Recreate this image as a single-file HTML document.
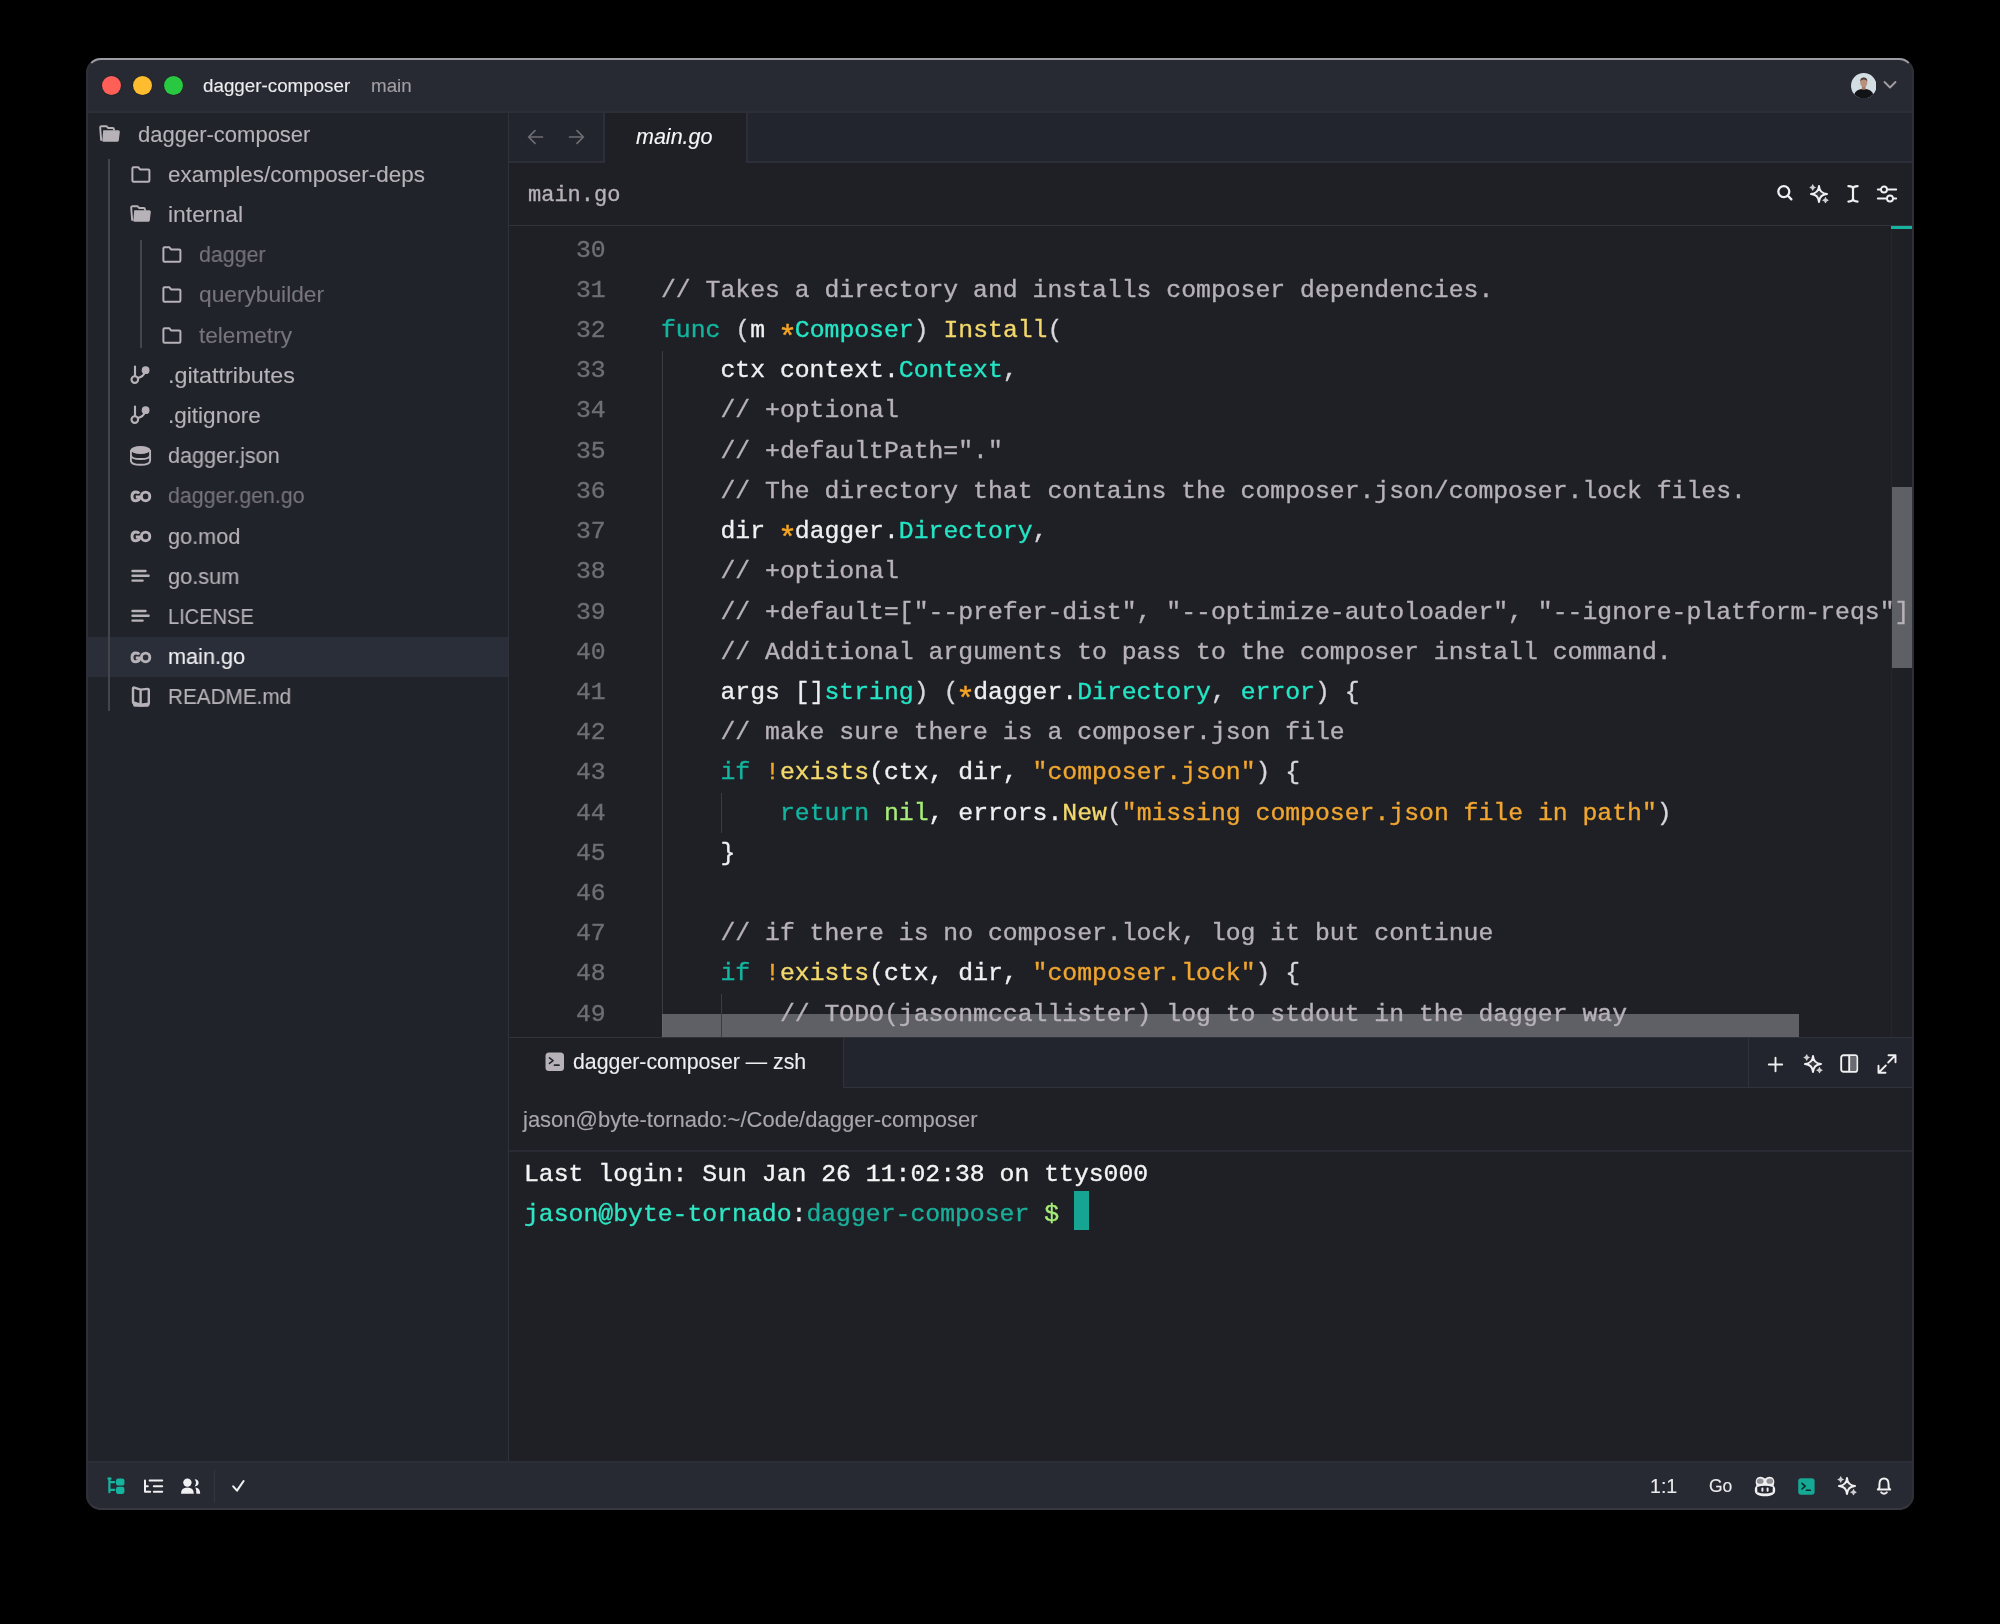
<!DOCTYPE html><html><head><meta charset="utf-8"><style>html,body{margin:0;padding:0;background:#000;width:2000px;height:1624px;overflow:hidden;position:relative} div{-webkit-text-stroke:0.12px} .t{will-change:transform}</style></head><body>
<div style="position:absolute;left:86px;top:58px;width:1828px;height:1452px;border-radius:15px;overflow:hidden;background:#1f2025">
<div style="position:absolute;left:-86px;top:-58px;width:2000px;height:1624px">
<div style="position:absolute;left:86px;top:58px;width:1828px;height:54px;background:#282a33;"></div>
<div style="position:absolute;left:86px;top:111px;width:1828px;height:2px;background:#2c2e38;"></div>
<div style="position:absolute;left:102.1px;top:75.7px;width:19px;height:19px;border-radius:50%;background:#ff5f57;box-shadow:0 0 0 0.6px rgba(0,0,0,0.25)"></div>
<div style="position:absolute;left:132.9px;top:75.7px;width:19px;height:19px;border-radius:50%;background:#febc2e;box-shadow:0 0 0 0.6px rgba(0,0,0,0.25)"></div>
<div style="position:absolute;left:163.7px;top:75.7px;width:19px;height:19px;border-radius:50%;background:#28c840;box-shadow:0 0 0 0.6px rgba(0,0,0,0.25)"></div>
<div class="t" style="position:absolute;left:203px;top:66.69px;height:37.6px;line-height:37.6px;font-family:'Liberation Sans', sans-serif;font-size:18.8px;color:#ececee;font-style:normal;font-weight:normal;letter-spacing:0px;white-space:pre;">dagger-composer</div>
<div class="t" style="position:absolute;left:370.5px;top:66.69px;height:37.6px;line-height:37.6px;font-family:'Liberation Sans', sans-serif;font-size:18.8px;color:#a29ea4;font-style:normal;font-weight:normal;letter-spacing:0px;white-space:pre;">main</div>
<svg style="position:absolute;left:1850.7px;top:72.5px" width="25.5" height="25.5" viewBox="0 0 25.5 25.5"><defs><clipPath id="av"><circle cx="12.75" cy="12.75" r="12.75"/></clipPath></defs><g clip-path="url(#av)"><rect width="26" height="26" fill="#d3dee2"/><path d="M2 26 Q3 17.5 8.5 16.4 L12.75 15.6 L17 16.4 Q22.5 17.5 23.5 26 Z" fill="#121317"/><rect x="10.9" y="12.5" width="3.7" height="4.2" fill="#a67d6a"/><ellipse cx="12.75" cy="9.4" rx="3.6" ry="4.6" fill="#b9907c"/><path d="M9.1 8.2 Q9.2 4.4 12.75 4.4 Q16.3 4.4 16.4 8.2 Q14.6 6.4 12.75 6.6 Q10.9 6.4 9.1 8.2 Z" fill="#4b3a33"/></g></svg>
<svg style="position:absolute;left:1883px;top:80px" width="14" height="10" viewBox="0 0 14 10"><path d="M1.5 2 L7 7.5 L12.5 2" stroke="#a29ea4" stroke-width="1.8" fill="none" stroke-linecap="round" stroke-linejoin="round"/></svg>
<div style="position:absolute;left:86px;top:113px;width:422px;height:1349px;background:#21232b;"></div>
<div style="position:absolute;left:508px;top:113px;width:1px;height:1349px;background:#30333c;"></div>
<div style="position:absolute;left:86px;top:636.6px;width:422px;height:40.2px;background:#2a2e39;"></div>
<div style="position:absolute;left:108.4px;top:159px;width:2px;height:552px;background:#45464c;"></div>
<div style="position:absolute;left:139.6px;top:240px;width:2px;height:108px;background:#45464c;"></div>
<svg style="position:absolute;left:98.6px;top:125.0px" width="22" height="18" viewBox="0 0 22 18"><path d="M2.2 15.8 L1.2 2.6 Q1.1 1.2 2.5 1.2 L7.4 1.2 L9.2 3.0 L13.6 3.0 Q15 3.0 15 4.4 L15 5.6" stroke="#b7b2b8" stroke-width="1.9" fill="none" stroke-linejoin="round"/><path d="M4.2 5.2 L19.2 5.2 Q21 5.2 20.8 7 L19.8 15.2 Q19.6 16.8 18 16.8 L4.6 16.8 Q3.2 16.8 3.3 15.4 Z" fill="#b7b2b8"/></svg>
<div class="t" style="position:absolute;left:137.6px;top:112.58px;height:44px;line-height:44px;font-family:'Liberation Sans', sans-serif;font-size:22px;color:#b7b2b8;font-style:normal;font-weight:normal;letter-spacing:0px;white-space:pre;">dagger-composer</div>
<svg style="position:absolute;left:130.79999999999998px;top:165.79999999999998px" width="20" height="17" viewBox="0 0 20 17"><path d="M1.4 2.4 Q1.4 1.2 2.6 1.2 L7.2 1.2 L9 3.4 L17.2 3.4 Q18.4 3.4 18.4 4.6 L18.4 14.6 Q18.4 15.8 17.2 15.8 L2.6 15.8 Q1.4 15.8 1.4 14.6 Z" stroke="#b7b2b8" stroke-width="2" fill="none" stroke-linejoin="round"/></svg>
<div class="t" style="position:absolute;left:168.35px;top:152.78px;height:44px;line-height:44px;font-family:'Liberation Sans', sans-serif;font-size:22px;color:#b7b2b8;font-style:normal;font-weight:normal;letter-spacing:0px;white-space:pre;transform:scaleX(1.0199);transform-origin:0 0;">examples/composer-deps</div>
<svg style="position:absolute;left:129.79999999999998px;top:205.4px" width="22" height="18" viewBox="0 0 22 18"><path d="M2.2 15.8 L1.2 2.6 Q1.1 1.2 2.5 1.2 L7.4 1.2 L9.2 3.0 L13.6 3.0 Q15 3.0 15 4.4 L15 5.6" stroke="#b7b2b8" stroke-width="1.9" fill="none" stroke-linejoin="round"/><path d="M4.2 5.2 L19.2 5.2 Q21 5.2 20.8 7 L19.8 15.2 Q19.6 16.8 18 16.8 L4.6 16.8 Q3.2 16.8 3.3 15.4 Z" fill="#b7b2b8"/></svg>
<div class="t" style="position:absolute;left:168.35px;top:192.98px;height:44px;line-height:44px;font-family:'Liberation Sans', sans-serif;font-size:22px;color:#b7b2b8;font-style:normal;font-weight:normal;letter-spacing:0px;white-space:pre;transform:scaleX(1.0393);transform-origin:0 0;">internal</div>
<svg style="position:absolute;left:162.0px;top:246.20000000000002px" width="20" height="17" viewBox="0 0 20 17"><path d="M1.4 2.4 Q1.4 1.2 2.6 1.2 L7.2 1.2 L9 3.4 L17.2 3.4 Q18.4 3.4 18.4 4.6 L18.4 14.6 Q18.4 15.8 17.2 15.8 L2.6 15.8 Q1.4 15.8 1.4 14.6 Z" stroke="#b7b2b8" stroke-width="2" fill="none" stroke-linejoin="round"/></svg>
<div class="t" style="position:absolute;left:199.1px;top:233.18px;height:44px;line-height:44px;font-family:'Liberation Sans', sans-serif;font-size:22px;color:#78747b;font-style:normal;font-weight:normal;letter-spacing:0px;white-space:pre;transform:scaleX(0.9706);transform-origin:0 0;">dagger</div>
<svg style="position:absolute;left:162.0px;top:286.40000000000003px" width="20" height="17" viewBox="0 0 20 17"><path d="M1.4 2.4 Q1.4 1.2 2.6 1.2 L7.2 1.2 L9 3.4 L17.2 3.4 Q18.4 3.4 18.4 4.6 L18.4 14.6 Q18.4 15.8 17.2 15.8 L2.6 15.8 Q1.4 15.8 1.4 14.6 Z" stroke="#b7b2b8" stroke-width="2" fill="none" stroke-linejoin="round"/></svg>
<div class="t" style="position:absolute;left:199.1px;top:273.38px;height:44px;line-height:44px;font-family:'Liberation Sans', sans-serif;font-size:22px;color:#78747b;font-style:normal;font-weight:normal;letter-spacing:0px;white-space:pre;transform:scaleX(1.0325);transform-origin:0 0;">querybuilder</div>
<svg style="position:absolute;left:162.0px;top:326.6px" width="20" height="17" viewBox="0 0 20 17"><path d="M1.4 2.4 Q1.4 1.2 2.6 1.2 L7.2 1.2 L9 3.4 L17.2 3.4 Q18.4 3.4 18.4 4.6 L18.4 14.6 Q18.4 15.8 17.2 15.8 L2.6 15.8 Q1.4 15.8 1.4 14.6 Z" stroke="#b7b2b8" stroke-width="2" fill="none" stroke-linejoin="round"/></svg>
<div class="t" style="position:absolute;left:199.1px;top:313.58px;height:44px;line-height:44px;font-family:'Liberation Sans', sans-serif;font-size:22px;color:#78747b;font-style:normal;font-weight:normal;letter-spacing:0px;white-space:pre;transform:scaleX(1.0275);transform-origin:0 0;">telemetry</div>
<svg style="position:absolute;left:130.29999999999998px;top:364.6px" width="22" height="22" viewBox="0 0 22 22"><path d="M5 1.6 L5 10.6" stroke="#b7b2b8" stroke-width="2.1" stroke-linecap="round"/><circle cx="4.8" cy="14.6" r="3.3" stroke="#b7b2b8" stroke-width="2.1" fill="none"/><circle cx="15.6" cy="5.2" r="3.9" fill="#b7b2b8"/><path d="M7.6 13 Q13.2 11.8 14.6 7.6" stroke="#b7b2b8" stroke-width="2.1" fill="none"/></svg>
<div class="t" style="position:absolute;left:168.35px;top:353.78px;height:44px;line-height:44px;font-family:'Liberation Sans', sans-serif;font-size:22px;color:#b7b2b8;font-style:normal;font-weight:normal;letter-spacing:0px;white-space:pre;transform:scaleX(1.0590);transform-origin:0 0;">.gitattributes</div>
<svg style="position:absolute;left:130.29999999999998px;top:404.8px" width="22" height="22" viewBox="0 0 22 22"><path d="M5 1.6 L5 10.6" stroke="#b7b2b8" stroke-width="2.1" stroke-linecap="round"/><circle cx="4.8" cy="14.6" r="3.3" stroke="#b7b2b8" stroke-width="2.1" fill="none"/><circle cx="15.6" cy="5.2" r="3.9" fill="#b7b2b8"/><path d="M7.6 13 Q13.2 11.8 14.6 7.6" stroke="#b7b2b8" stroke-width="2.1" fill="none"/></svg>
<div class="t" style="position:absolute;left:168.35px;top:393.98px;height:44px;line-height:44px;font-family:'Liberation Sans', sans-serif;font-size:22px;color:#b7b2b8;font-style:normal;font-weight:normal;letter-spacing:0px;white-space:pre;transform:scaleX(1.0250);transform-origin:0 0;">.gitignore</div>
<svg style="position:absolute;left:129.79999999999998px;top:445.1px" width="22" height="22" viewBox="0 0 22 22"><ellipse cx="10.5" cy="5" rx="10" ry="4" fill="#b7b2b8"/><path d="M0.9 5 L0.9 15.5 Q0.9 19.8 10.5 19.8 Q20.1 19.8 20.1 15.5 L20.1 5" stroke="#b7b2b8" stroke-width="1.9" fill="none"/><path d="M1 10.2 Q1 14 10.5 14 Q20 14 20 10.2" stroke="#b7b2b8" stroke-width="1.9" fill="none"/></svg>
<div class="t" style="position:absolute;left:168.35px;top:434.18px;height:44px;line-height:44px;font-family:'Liberation Sans', sans-serif;font-size:22px;color:#b7b2b8;font-style:normal;font-weight:normal;letter-spacing:0px;white-space:pre;transform:scaleX(0.9821);transform-origin:0 0;">dagger.json</div>
<svg style="position:absolute;left:129.6px;top:489.8px" width="22" height="13" viewBox="0 0 22 13"><path d="M9.2 3.6 Q8.2 2.0 5.9 2.0 Q2.0 2.0 2.0 6.4 Q2.0 10.8 5.9 10.8 Q9.6 10.8 9.9 7.0 L5.8 7.0" stroke="#b7b2b8" stroke-width="2.9" fill="none" stroke-linejoin="round"/><ellipse cx="15.6" cy="6.4" rx="4.2" ry="4.3" stroke="#b7b2b8" stroke-width="2.9" fill="none"/></svg>
<div class="t" style="position:absolute;left:168.35px;top:474.38px;height:44px;line-height:44px;font-family:'Liberation Sans', sans-serif;font-size:22px;color:#78747b;font-style:normal;font-weight:normal;letter-spacing:0px;white-space:pre;transform:scaleX(0.9705);transform-origin:0 0;">dagger.gen.go</div>
<svg style="position:absolute;left:129.6px;top:530.0px" width="22" height="13" viewBox="0 0 22 13"><path d="M9.2 3.6 Q8.2 2.0 5.9 2.0 Q2.0 2.0 2.0 6.4 Q2.0 10.8 5.9 10.8 Q9.6 10.8 9.9 7.0 L5.8 7.0" stroke="#b7b2b8" stroke-width="2.9" fill="none" stroke-linejoin="round"/><ellipse cx="15.6" cy="6.4" rx="4.2" ry="4.3" stroke="#b7b2b8" stroke-width="2.9" fill="none"/></svg>
<div class="t" style="position:absolute;left:168.35px;top:514.58px;height:44px;line-height:44px;font-family:'Liberation Sans', sans-serif;font-size:22px;color:#b7b2b8;font-style:normal;font-weight:normal;letter-spacing:0px;white-space:pre;transform:scaleX(0.9847);transform-origin:0 0;">go.mod</div>
<svg style="position:absolute;left:130.79999999999998px;top:569.2px" width="20" height="14" viewBox="0 0 20 14"><path d="M1.5 2 L14.5 2 M1.5 6.8 L17.6 6.8 M1.5 11.6 L11.6 11.6" stroke="#b7b2b8" stroke-width="2.4" stroke-linecap="round"/></svg>
<div class="t" style="position:absolute;left:168.35px;top:554.78px;height:44px;line-height:44px;font-family:'Liberation Sans', sans-serif;font-size:22px;color:#b7b2b8;font-style:normal;font-weight:normal;letter-spacing:0px;white-space:pre;transform:scaleX(0.9900);transform-origin:0 0;">go.sum</div>
<svg style="position:absolute;left:130.79999999999998px;top:609.4000000000001px" width="20" height="14" viewBox="0 0 20 14"><path d="M1.5 2 L14.5 2 M1.5 6.8 L17.6 6.8 M1.5 11.6 L11.6 11.6" stroke="#b7b2b8" stroke-width="2.4" stroke-linecap="round"/></svg>
<div class="t" style="position:absolute;left:168.35px;top:594.98px;height:44px;line-height:44px;font-family:'Liberation Sans', sans-serif;font-size:22px;color:#b7b2b8;font-style:normal;font-weight:normal;letter-spacing:0px;white-space:pre;transform:scaleX(0.9108);transform-origin:0 0;">LICENSE</div>
<svg style="position:absolute;left:129.6px;top:650.6px" width="22" height="13" viewBox="0 0 22 13"><path d="M9.2 3.6 Q8.2 2.0 5.9 2.0 Q2.0 2.0 2.0 6.4 Q2.0 10.8 5.9 10.8 Q9.6 10.8 9.9 7.0 L5.8 7.0" stroke="#b7b2b8" stroke-width="2.9" fill="none" stroke-linejoin="round"/><ellipse cx="15.6" cy="6.4" rx="4.2" ry="4.3" stroke="#b7b2b8" stroke-width="2.9" fill="none"/></svg>
<div class="t" style="position:absolute;left:168.35px;top:635.18px;height:44px;line-height:44px;font-family:'Liberation Sans', sans-serif;font-size:22px;color:#f0eff1;font-style:normal;font-weight:normal;letter-spacing:0px;white-space:pre;transform:scaleX(0.9857);transform-origin:0 0;">main.go</div>
<svg style="position:absolute;left:130.79999999999998px;top:686.3000000000001px" width="20" height="22" viewBox="0 0 20 22"><path d="M2 2.5 Q2 1.2 3.3 1.6 L9.6 3.6 L9.6 19.6 L3.3 17.6 Q2 17.2 2 15.9 Z M9.6 3.6 L16.4 2.9 Q17.8 2.8 17.8 4.1 L17.8 17.4 Q17.8 18.6 16.4 18.8 L9.6 19.6" stroke="#b7b2b8" stroke-width="2.4" fill="none" stroke-linejoin="round"/><path d="M2 15 L9.6 17.5 L17.8 16.6 L17.8 20 Q17.8 20.8 16.8 20.8 L4 20.8 Q2 20.8 2 19 Z" fill="#b7b2b8"/></svg>
<div class="t" style="position:absolute;left:168.35px;top:675.38px;height:44px;line-height:44px;font-family:'Liberation Sans', sans-serif;font-size:22px;color:#b7b2b8;font-style:normal;font-weight:normal;letter-spacing:0px;white-space:pre;transform:scaleX(0.9419);transform-origin:0 0;">README.md</div>
<div style="position:absolute;left:509px;top:113px;width:1405px;height:48px;background:#22252d;"></div>
<div style="position:absolute;left:509px;top:161px;width:1405px;height:2px;background:#2c2f3a;"></div>
<div style="position:absolute;left:603px;top:113px;width:2px;height:48px;background:#2c2f3a;"></div>
<div style="position:absolute;left:605px;top:113px;width:141px;height:50px;background:#1f2025;"></div>
<div style="position:absolute;left:746px;top:113px;width:2px;height:49px;background:#2c2f3a;"></div>
<svg style="position:absolute;left:527px;top:129px" width="17" height="16" viewBox="0 0 17 16"><path d="M15.5 8 L1.8 8 M8 1.6 L1.6 8 L8 14.4" stroke="#6d6c72" stroke-width="1.7" fill="none" stroke-linecap="round" stroke-linejoin="round"/></svg>
<svg style="position:absolute;left:568px;top:129px" width="17" height="16" viewBox="0 0 17 16"><path d="M1.5 8 L15.2 8 M9 1.6 L15.4 8 L9 14.4" stroke="#6d6c72" stroke-width="1.7" fill="none" stroke-linecap="round" stroke-linejoin="round"/></svg>
<div class="t" style="position:absolute;left:636px;top:115.75px;height:43.0px;line-height:43.0px;font-family:'Liberation Sans', sans-serif;font-size:21.5px;color:#f6f6f7;font-style:italic;font-weight:normal;letter-spacing:0px;white-space:pre;">main.go</div>
<div class="t" style="position:absolute;left:527.5px;top:174.14px;height:44px;line-height:44px;font-family:'Liberation Mono', monospace;font-size:22px;color:#b7b2b8;font-style:normal;font-weight:normal;letter-spacing:0px;white-space:pre;-webkit-text-stroke:0.35px;">main.go</div>
<div style="position:absolute;left:509px;top:225px;width:1404.5px;height:1px;background:#30333c;"></div>
<svg style="position:absolute;left:1775px;top:183px" width="20" height="20" viewBox="0 0 20 20"><circle cx="8.8" cy="8.6" r="5.5" stroke="#f0eff1" stroke-width="2.3" fill="none"/><path d="M12.9 12.7 L16.4 16.4" stroke="#f0eff1" stroke-width="2.3" stroke-linecap="round"/></svg>
<svg style="position:absolute;left:1806.8px;top:181.6px" width="24" height="24" viewBox="0 0 24 24"><path d="M12 4.0 Q12.6 11.4 20.0 12 Q12.6 12.6 12 20.0 Q11.4 12.6 4.0 12 Q11.4 11.4 12 4.0 Z" stroke="#f0eff1" stroke-width="2.0" fill="#36373d" stroke-linejoin="round"/><path d="M5.7 2.9 Q5.95 5.25 8.3 5.5 Q5.95 5.75 5.7 8.1 Q5.45 5.75 3.1 5.5 Q5.45 5.25 5.7 2.9 Z M18.5 15.6 Q18.75 17.95 21.1 18.2 Q18.75 18.45 18.5 20.8 Q18.25 18.45 15.9 18.2 Q18.25 17.95 18.5 15.6 Z" fill="#d0cfd3" stroke="#d0cfd3" stroke-width="1.1" stroke-linejoin="round"/></svg>
<svg style="position:absolute;left:1846px;top:184px" width="14" height="20" viewBox="0 0 14 20"><path d="M2.4 2.2 Q7 2.2 7 5.2 L7 14.6 Q7 17.6 2.4 17.6 M11.6 2.2 Q7 2.2 7 5.2 M7 14.6 Q7 17.6 11.6 17.6" stroke="#f0eff1" stroke-width="2.2" fill="none" stroke-linecap="round"/></svg>
<svg style="position:absolute;left:1876px;top:184px" width="22" height="20" viewBox="0 0 22 20"><path d="M1.8 5.5 L20.2 5.5 M1.8 14.5 L20.2 14.5" stroke="#f0eff1" stroke-width="1.9" stroke-linecap="round"/><circle cx="8" cy="5.5" r="3" fill="#1f2025" stroke="#f0eff1" stroke-width="1.9"/><circle cx="14" cy="14.5" r="3" fill="#1f2025" stroke="#f0eff1" stroke-width="1.9"/></svg>
<div style="position:absolute;left:661.5px;top:350.93px;width:1.2px;height:686.0699999999999px;background:#3b3c42;"></div>
<div style="position:absolute;left:662px;top:1014.2px;width:1137px;height:22.5px;background:rgba(120,121,126,0.72);"></div>
<div style="position:absolute;left:1891.6px;top:487.2px;width:22px;height:180.6px;background:rgba(120,121,126,0.72);"></div>
<div style="position:absolute;left:1891.2px;top:226px;width:22.3px;height:3.2px;background:#16b39e;"></div>
<div style="position:absolute;left:1890.5px;top:229px;width:1px;height:808px;background:#23262e;"></div>
<div style="position:absolute;left:0;top:0;width:2000px;height:1037px;overflow:hidden">
<div class="t" style="position:absolute;left:576.2664px;top:225.62px;height:49.56px;line-height:49.56px;font-family:'Liberation Mono', monospace;font-size:24.778px;color:#6f6e74;font-style:normal;font-weight:normal;letter-spacing:0px;white-space:pre;-webkit-text-stroke:0.35px;">30</div>
<div class="t" style="position:absolute;left:576.2664px;top:265.83px;height:49.56px;line-height:49.56px;font-family:'Liberation Mono', monospace;font-size:24.778px;color:#6f6e74;font-style:normal;font-weight:normal;letter-spacing:0px;white-space:pre;-webkit-text-stroke:0.35px;">31</div>
<div class="t" style="position:absolute;left:660.5px;top:265.83px;height:49.56px;line-height:49.56px;font-family:'Liberation Mono', monospace;font-size:24.778px;color:#f0eff1;font-style:normal;font-weight:normal;letter-spacing:0px;white-space:pre;-webkit-text-stroke:0.35px;"><span style="color:#b7b2b8">// Takes a directory and installs composer dependencies.</span></div>
<div class="t" style="position:absolute;left:576.2664px;top:306.04px;height:49.56px;line-height:49.56px;font-family:'Liberation Mono', monospace;font-size:24.778px;color:#6f6e74;font-style:normal;font-weight:normal;letter-spacing:0px;white-space:pre;-webkit-text-stroke:0.35px;">32</div>
<div class="t" style="position:absolute;left:660.5px;top:306.04px;height:49.56px;line-height:49.56px;font-family:'Liberation Mono', monospace;font-size:24.778px;color:#f0eff1;font-style:normal;font-weight:normal;letter-spacing:0px;white-space:pre;-webkit-text-stroke:0.35px;"><span style="color:#13b5a0">func</span><span style="color:#d8d6da"> (</span><span style="color:#f0eff1">m </span><span style="color:#f5a524;display:inline-block;transform:translateY(7.8px) scale(1.28)">*</span><span style="color:#24e6c6">Composer</span><span style="color:#d8d6da">) </span><span style="color:#f3d86b">Install</span><span style="color:#d8d6da">(</span></div>
<div class="t" style="position:absolute;left:576.2664px;top:346.25px;height:49.56px;line-height:49.56px;font-family:'Liberation Mono', monospace;font-size:24.778px;color:#6f6e74;font-style:normal;font-weight:normal;letter-spacing:0px;white-space:pre;-webkit-text-stroke:0.35px;">33</div>
<div class="t" style="position:absolute;left:660.5px;top:346.25px;height:49.56px;line-height:49.56px;font-family:'Liberation Mono', monospace;font-size:24.778px;color:#f0eff1;font-style:normal;font-weight:normal;letter-spacing:0px;white-space:pre;-webkit-text-stroke:0.35px;"><span style="color:#f0eff1">    ctx context.</span><span style="color:#24e6c6">Context</span><span style="color:#d8d6da">,</span></div>
<div class="t" style="position:absolute;left:576.2664px;top:386.46px;height:49.56px;line-height:49.56px;font-family:'Liberation Mono', monospace;font-size:24.778px;color:#6f6e74;font-style:normal;font-weight:normal;letter-spacing:0px;white-space:pre;-webkit-text-stroke:0.35px;">34</div>
<div class="t" style="position:absolute;left:660.5px;top:386.46px;height:49.56px;line-height:49.56px;font-family:'Liberation Mono', monospace;font-size:24.778px;color:#f0eff1;font-style:normal;font-weight:normal;letter-spacing:0px;white-space:pre;-webkit-text-stroke:0.35px;"><span style="color:#b7b2b8">    // +optional</span></div>
<div class="t" style="position:absolute;left:576.2664px;top:426.67px;height:49.56px;line-height:49.56px;font-family:'Liberation Mono', monospace;font-size:24.778px;color:#6f6e74;font-style:normal;font-weight:normal;letter-spacing:0px;white-space:pre;-webkit-text-stroke:0.35px;">35</div>
<div class="t" style="position:absolute;left:660.5px;top:426.67px;height:49.56px;line-height:49.56px;font-family:'Liberation Mono', monospace;font-size:24.778px;color:#f0eff1;font-style:normal;font-weight:normal;letter-spacing:0px;white-space:pre;-webkit-text-stroke:0.35px;"><span style="color:#b7b2b8">    // +defaultPath="."</span></div>
<div class="t" style="position:absolute;left:576.2664px;top:466.88px;height:49.56px;line-height:49.56px;font-family:'Liberation Mono', monospace;font-size:24.778px;color:#6f6e74;font-style:normal;font-weight:normal;letter-spacing:0px;white-space:pre;-webkit-text-stroke:0.35px;">36</div>
<div class="t" style="position:absolute;left:660.5px;top:466.88px;height:49.56px;line-height:49.56px;font-family:'Liberation Mono', monospace;font-size:24.778px;color:#f0eff1;font-style:normal;font-weight:normal;letter-spacing:0px;white-space:pre;-webkit-text-stroke:0.35px;"><span style="color:#b7b2b8">    // The directory that contains the composer.json/composer.lock files.</span></div>
<div class="t" style="position:absolute;left:576.2664px;top:507.09px;height:49.56px;line-height:49.56px;font-family:'Liberation Mono', monospace;font-size:24.778px;color:#6f6e74;font-style:normal;font-weight:normal;letter-spacing:0px;white-space:pre;-webkit-text-stroke:0.35px;">37</div>
<div class="t" style="position:absolute;left:660.5px;top:507.09px;height:49.56px;line-height:49.56px;font-family:'Liberation Mono', monospace;font-size:24.778px;color:#f0eff1;font-style:normal;font-weight:normal;letter-spacing:0px;white-space:pre;-webkit-text-stroke:0.35px;"><span style="color:#f0eff1">    dir </span><span style="color:#f5a524;display:inline-block;transform:translateY(7.8px) scale(1.28)">*</span><span style="color:#f0eff1">dagger.</span><span style="color:#24e6c6">Directory</span><span style="color:#d8d6da">,</span></div>
<div class="t" style="position:absolute;left:576.2664px;top:547.30px;height:49.56px;line-height:49.56px;font-family:'Liberation Mono', monospace;font-size:24.778px;color:#6f6e74;font-style:normal;font-weight:normal;letter-spacing:0px;white-space:pre;-webkit-text-stroke:0.35px;">38</div>
<div class="t" style="position:absolute;left:660.5px;top:547.30px;height:49.56px;line-height:49.56px;font-family:'Liberation Mono', monospace;font-size:24.778px;color:#f0eff1;font-style:normal;font-weight:normal;letter-spacing:0px;white-space:pre;-webkit-text-stroke:0.35px;"><span style="color:#b7b2b8">    // +optional</span></div>
<div class="t" style="position:absolute;left:576.2664px;top:587.51px;height:49.56px;line-height:49.56px;font-family:'Liberation Mono', monospace;font-size:24.778px;color:#6f6e74;font-style:normal;font-weight:normal;letter-spacing:0px;white-space:pre;-webkit-text-stroke:0.35px;">39</div>
<div class="t" style="position:absolute;left:660.5px;top:587.51px;height:49.56px;line-height:49.56px;font-family:'Liberation Mono', monospace;font-size:24.778px;color:#f0eff1;font-style:normal;font-weight:normal;letter-spacing:0px;white-space:pre;-webkit-text-stroke:0.35px;"><span style="color:#b7b2b8">    // +default=["--prefer-dist", "--optimize-autoloader", "--ignore-platform-reqs"]</span></div>
<div class="t" style="position:absolute;left:576.2664px;top:627.72px;height:49.56px;line-height:49.56px;font-family:'Liberation Mono', monospace;font-size:24.778px;color:#6f6e74;font-style:normal;font-weight:normal;letter-spacing:0px;white-space:pre;-webkit-text-stroke:0.35px;">40</div>
<div class="t" style="position:absolute;left:660.5px;top:627.72px;height:49.56px;line-height:49.56px;font-family:'Liberation Mono', monospace;font-size:24.778px;color:#f0eff1;font-style:normal;font-weight:normal;letter-spacing:0px;white-space:pre;-webkit-text-stroke:0.35px;"><span style="color:#b7b2b8">    // Additional arguments to pass to the composer install command.</span></div>
<div class="t" style="position:absolute;left:576.2664px;top:667.93px;height:49.56px;line-height:49.56px;font-family:'Liberation Mono', monospace;font-size:24.778px;color:#6f6e74;font-style:normal;font-weight:normal;letter-spacing:0px;white-space:pre;-webkit-text-stroke:0.35px;">41</div>
<div class="t" style="position:absolute;left:660.5px;top:667.93px;height:49.56px;line-height:49.56px;font-family:'Liberation Mono', monospace;font-size:24.778px;color:#f0eff1;font-style:normal;font-weight:normal;letter-spacing:0px;white-space:pre;-webkit-text-stroke:0.35px;"><span style="color:#f0eff1">    args []</span><span style="color:#24e6c6">string</span><span style="color:#d8d6da">) (</span><span style="color:#f5a524;display:inline-block;transform:translateY(7.8px) scale(1.28)">*</span><span style="color:#f0eff1">dagger.</span><span style="color:#24e6c6">Directory</span><span style="color:#d8d6da">, </span><span style="color:#24e6c6">error</span><span style="color:#d8d6da">) {</span></div>
<div class="t" style="position:absolute;left:576.2664px;top:708.14px;height:49.56px;line-height:49.56px;font-family:'Liberation Mono', monospace;font-size:24.778px;color:#6f6e74;font-style:normal;font-weight:normal;letter-spacing:0px;white-space:pre;-webkit-text-stroke:0.35px;">42</div>
<div class="t" style="position:absolute;left:660.5px;top:708.14px;height:49.56px;line-height:49.56px;font-family:'Liberation Mono', monospace;font-size:24.778px;color:#f0eff1;font-style:normal;font-weight:normal;letter-spacing:0px;white-space:pre;-webkit-text-stroke:0.35px;"><span style="color:#b7b2b8">    // make sure there is a composer.json file</span></div>
<div class="t" style="position:absolute;left:576.2664px;top:748.35px;height:49.56px;line-height:49.56px;font-family:'Liberation Mono', monospace;font-size:24.778px;color:#6f6e74;font-style:normal;font-weight:normal;letter-spacing:0px;white-space:pre;-webkit-text-stroke:0.35px;">43</div>
<div class="t" style="position:absolute;left:660.5px;top:748.35px;height:49.56px;line-height:49.56px;font-family:'Liberation Mono', monospace;font-size:24.778px;color:#f0eff1;font-style:normal;font-weight:normal;letter-spacing:0px;white-space:pre;-webkit-text-stroke:0.35px;"><span style="color:#f0eff1">    </span><span style="color:#13b5a0">if</span><span style="color:#f0eff1"> </span><span style="color:#f5a524">!</span><span style="color:#f3d86b">exists</span><span style="color:#f0eff1">(ctx, dir, </span><span style="color:#f0a630">"composer.json"</span><span style="color:#d8d6da">) {</span></div>
<div class="t" style="position:absolute;left:576.2664px;top:788.56px;height:49.56px;line-height:49.56px;font-family:'Liberation Mono', monospace;font-size:24.778px;color:#6f6e74;font-style:normal;font-weight:normal;letter-spacing:0px;white-space:pre;-webkit-text-stroke:0.35px;">44</div>
<div class="t" style="position:absolute;left:660.5px;top:788.56px;height:49.56px;line-height:49.56px;font-family:'Liberation Mono', monospace;font-size:24.778px;color:#f0eff1;font-style:normal;font-weight:normal;letter-spacing:0px;white-space:pre;-webkit-text-stroke:0.35px;"><span style="color:#f0eff1">        </span><span style="color:#13b5a0">return</span><span style="color:#f0eff1"> </span><span style="color:#a6ec78">nil</span><span style="color:#f0eff1">, errors.</span><span style="color:#f3d86b">New</span><span style="color:#d8d6da">(</span><span style="color:#f0a630">"missing composer.json file in path"</span><span style="color:#d8d6da">)</span></div>
<div class="t" style="position:absolute;left:576.2664px;top:828.77px;height:49.56px;line-height:49.56px;font-family:'Liberation Mono', monospace;font-size:24.778px;color:#6f6e74;font-style:normal;font-weight:normal;letter-spacing:0px;white-space:pre;-webkit-text-stroke:0.35px;">45</div>
<div class="t" style="position:absolute;left:660.5px;top:828.77px;height:49.56px;line-height:49.56px;font-family:'Liberation Mono', monospace;font-size:24.778px;color:#f0eff1;font-style:normal;font-weight:normal;letter-spacing:0px;white-space:pre;-webkit-text-stroke:0.35px;"><span style="color:#f0eff1">    }</span></div>
<div class="t" style="position:absolute;left:576.2664px;top:868.98px;height:49.56px;line-height:49.56px;font-family:'Liberation Mono', monospace;font-size:24.778px;color:#6f6e74;font-style:normal;font-weight:normal;letter-spacing:0px;white-space:pre;-webkit-text-stroke:0.35px;">46</div>
<div class="t" style="position:absolute;left:576.2664px;top:909.19px;height:49.56px;line-height:49.56px;font-family:'Liberation Mono', monospace;font-size:24.778px;color:#6f6e74;font-style:normal;font-weight:normal;letter-spacing:0px;white-space:pre;-webkit-text-stroke:0.35px;">47</div>
<div class="t" style="position:absolute;left:660.5px;top:909.19px;height:49.56px;line-height:49.56px;font-family:'Liberation Mono', monospace;font-size:24.778px;color:#f0eff1;font-style:normal;font-weight:normal;letter-spacing:0px;white-space:pre;-webkit-text-stroke:0.35px;"><span style="color:#b7b2b8">    // if there is no composer.lock, log it but continue</span></div>
<div class="t" style="position:absolute;left:576.2664px;top:949.40px;height:49.56px;line-height:49.56px;font-family:'Liberation Mono', monospace;font-size:24.778px;color:#6f6e74;font-style:normal;font-weight:normal;letter-spacing:0px;white-space:pre;-webkit-text-stroke:0.35px;">48</div>
<div class="t" style="position:absolute;left:660.5px;top:949.40px;height:49.56px;line-height:49.56px;font-family:'Liberation Mono', monospace;font-size:24.778px;color:#f0eff1;font-style:normal;font-weight:normal;letter-spacing:0px;white-space:pre;-webkit-text-stroke:0.35px;"><span style="color:#f0eff1">    </span><span style="color:#13b5a0">if</span><span style="color:#f0eff1"> </span><span style="color:#f5a524">!</span><span style="color:#f3d86b">exists</span><span style="color:#f0eff1">(ctx, dir, </span><span style="color:#f0a630">"composer.lock"</span><span style="color:#d8d6da">) {</span></div>
<div class="t" style="position:absolute;left:576.2664px;top:989.61px;height:49.56px;line-height:49.56px;font-family:'Liberation Mono', monospace;font-size:24.778px;color:#6f6e74;font-style:normal;font-weight:normal;letter-spacing:0px;white-space:pre;-webkit-text-stroke:0.35px;">49</div>
<div class="t" style="position:absolute;left:660.5px;top:989.61px;height:49.56px;line-height:49.56px;font-family:'Liberation Mono', monospace;font-size:24.778px;color:#f0eff1;font-style:normal;font-weight:normal;letter-spacing:0px;white-space:pre;-webkit-text-stroke:0.35px;"><span style="color:#b7b2b8">        // TODO(jasonmccallister) log to stdout in the dagger way</span></div>
</div>
<div style="position:absolute;left:720.6px;top:793.24px;width:1.2px;height:40.21px;background:#3b3c42;"></div>
<div style="position:absolute;left:720.6px;top:994.29px;width:1.2px;height:42.710000000000036px;background:#3b3c42;"></div>
<div style="position:absolute;left:509px;top:1037px;width:1404.5px;height:1px;background:#30333c;"></div>
<div style="position:absolute;left:509px;top:1038px;width:1404.5px;height:49px;background:#22252d;"></div>
<div style="position:absolute;left:509px;top:1038px;width:334px;height:50px;background:#1f2025;"></div>
<div style="position:absolute;left:843px;top:1038px;width:1px;height:49px;background:#30333c;"></div>
<div style="position:absolute;left:843px;top:1087px;width:1070.5px;height:1px;background:#30333c;"></div>
<div style="position:absolute;left:1748px;top:1038px;width:1px;height:49px;background:#30333c;"></div>
<svg style="position:absolute;left:544.5px;top:1052px" width="20" height="20" viewBox="0 0 20 20"><rect x="0.5" y="0.5" width="18.5" height="18.5" rx="3.5" fill="#b7b2b8"/><path d="M4.5 5.8 L8 8.6 L4.5 11.4" stroke="#26272d" stroke-width="1.7" fill="none" stroke-linecap="round" stroke-linejoin="round"/><path d="M9.5 13.2 L14 13.2" stroke="#26272d" stroke-width="1.7" stroke-linecap="round"/></svg>
<div class="t" style="position:absolute;left:573px;top:1041.02px;height:42.6px;line-height:42.6px;font-family:'Liberation Sans', sans-serif;font-size:21.3px;color:#eeedf0;font-style:normal;font-weight:normal;letter-spacing:0px;white-space:pre;">dagger-composer — zsh</div>
<svg style="position:absolute;left:1766px;top:1054.5px" width="18" height="18" viewBox="0 0 18 18"><path d="M9.5 2.8 L9.5 16.2 M2.8 9.5 L16.2 9.5" stroke="#f0eff1" stroke-width="1.9" stroke-linecap="round"/></svg>
<svg style="position:absolute;left:1800.6px;top:1051.6px" width="24" height="24" viewBox="0 0 24 24"><path d="M12 4.0 Q12.6 11.4 20.0 12 Q12.6 12.6 12 20.0 Q11.4 12.6 4.0 12 Q11.4 11.4 12 4.0 Z" stroke="#f0eff1" stroke-width="2.0" fill="#36373d" stroke-linejoin="round"/><path d="M5.7 2.9 Q5.95 5.25 8.3 5.5 Q5.95 5.75 5.7 8.1 Q5.45 5.75 3.1 5.5 Q5.45 5.25 5.7 2.9 Z M18.5 15.6 Q18.75 17.95 21.1 18.2 Q18.75 18.45 18.5 20.8 Q18.25 18.45 15.9 18.2 Q18.25 17.95 18.5 15.6 Z" fill="#d0cfd3" stroke="#d0cfd3" stroke-width="1.1" stroke-linejoin="round"/></svg>
<svg style="position:absolute;left:1840px;top:1053.5px" width="20" height="20" viewBox="0 0 20 20"><rect x="1.2" y="1.2" width="16" height="16.6" rx="2.4" stroke="#f0eff1" stroke-width="1.9" fill="none"/><rect x="10" y="2.2" width="6.2" height="14.6" fill="#6a6b72"/><path d="M9.2 1.2 L9.2 17.8" stroke="#f0eff1" stroke-width="1.9"/></svg>
<svg style="position:absolute;left:1876px;top:1052.5px" width="22" height="22" viewBox="0 0 22 22"><path d="M12.5 2.2 L19.5 2.2 L19.5 9.2 M19.5 2.2 L12.2 9.5 M2.5 12.8 L2.5 19.8 L9.5 19.8 M2.5 19.8 L9.8 12.5" stroke="#f0eff1" stroke-width="1.9" fill="none" stroke-linecap="round" stroke-linejoin="round"/></svg>
<div class="t" style="position:absolute;left:522.5px;top:1098.28px;height:44.0px;line-height:44.0px;font-family:'Liberation Sans', sans-serif;font-size:22.0px;color:#aaa6ac;font-style:normal;font-weight:normal;letter-spacing:0px;white-space:pre;">jason@byte-tornado:~/Code/dagger-composer</div>
<div style="position:absolute;left:509px;top:1150px;width:1405px;height:2px;background:#282b33;"></div>
<div class="t" style="position:absolute;left:523.6px;top:1149.92px;height:49.56px;line-height:49.56px;font-family:'Liberation Mono', monospace;font-size:24.778px;color:#f4f4f5;font-style:normal;font-weight:normal;letter-spacing:0px;white-space:pre;-webkit-text-stroke:0.35px;">Last login: Sun Jan 26 11:02:38 on ttys000</div>
<div class="t" style="position:absolute;left:523.6px;top:1190.22px;height:49.56px;line-height:49.56px;font-family:'Liberation Mono', monospace;font-size:24.778px;color:#f4f4f5;font-style:normal;font-weight:normal;letter-spacing:0px;white-space:pre;-webkit-text-stroke:0.35px;"><span style="color:#2ee6c4">jason@byte-tornado</span><span style="color:#f4f4f5">:</span><span style="color:#19b09b">dagger-composer</span> <span style="color:#a6ec78">$</span> </div>
<div style="position:absolute;left:1073.8px;top:1190.8px;width:15px;height:39.4px;background:#16a593;"></div>
<div style="position:absolute;left:86px;top:1462px;width:1828px;height:48px;background:#282a33;"></div>
<div style="position:absolute;left:86px;top:1461px;width:1828px;height:2px;background:#2b2e39;"></div>
<svg style="position:absolute;left:100px;top:1470px" width="30" height="30" viewBox="0 0 30 30"><path d="M9.4 8.6 L9.4 22.2 M9.4 12.2 L14.2 12.2 M9.4 19.8 L14.2 19.8" stroke="#16b39e" stroke-width="2.2" stroke-linecap="round"/><path d="M8.4 8.6 L10.6 8.6" stroke="#16b39e" stroke-width="2.2" stroke-linecap="round"/><rect x="16" y="8.4" width="8.4" height="7.2" rx="2.2" fill="#16b39e"/><rect x="16" y="16.8" width="8.4" height="7.2" rx="2.2" fill="#16b39e"/></svg>
<svg style="position:absolute;left:140px;top:1474px" width="26" height="22" viewBox="0 0 26 22"><path d="M5 6.6 L5 17.8 L10.2 17.8 M5 12.2 L7.8 12.2 M9.6 6.6 L22.2 6.6 M13.8 12.2 L22.2 12.2 M13.8 17.8 L22.2 17.8" stroke="#f0eff1" stroke-width="2" fill="none" stroke-linecap="round" stroke-linejoin="round"/></svg>
<svg style="position:absolute;left:178px;top:1474px" width="26" height="24" viewBox="0 0 26 24"><path d="M16.6 5.2 Q20.6 5.6 20.6 8.8 Q20.6 12 16.6 12.4 Q18 10.6 18 8.8 Q18 7 16.6 5.2 Z" fill="#f0eff1"/><path d="M17.4 13.6 Q22.2 14.2 22.2 19.8 L18.4 19.8 Q18.4 16 17.4 13.6 Z" fill="#f0eff1"/><circle cx="9.4" cy="8.6" r="4.2" fill="#f0eff1"/><path d="M3 19.8 Q3 13.4 9.4 13.4 Q15.8 13.4 15.8 19.8 Z" fill="#f0eff1"/></svg>
<div style="position:absolute;left:214.2px;top:1470px;width:1px;height:32.5px;background:#34363f;"></div>
<svg style="position:absolute;left:226px;top:1474px" width="24" height="22" viewBox="0 0 24 22"><path d="M7.2 12.4 L11 16.6 L17.6 7" stroke="#f0eff1" stroke-width="2.1" fill="none" stroke-linecap="round" stroke-linejoin="round"/></svg>
<div class="t" style="position:absolute;left:1649.6px;top:1466.51px;height:39.2px;line-height:39.2px;font-family:'Liberation Sans', sans-serif;font-size:19.6px;color:#ececee;font-style:normal;font-weight:normal;letter-spacing:0px;white-space:pre;">1:1</div>
<div class="t" style="position:absolute;left:1709px;top:1469.34px;height:35.0px;line-height:35.0px;font-family:'Liberation Sans', sans-serif;font-size:17.5px;color:#ececee;font-style:normal;font-weight:normal;letter-spacing:0px;white-space:pre;">Go</div>
<svg style="position:absolute;left:1752px;top:1474px" width="26" height="25" viewBox="0 0 26 25"><path d="M4.4 11.6 Q2.4 6.4 5.6 3.6 Q9 1.4 13 4.4 Q17 1.4 20.4 3.6 Q23.6 6.4 21.6 11.6 Q23.6 13.6 23.2 17 Q22.8 20.6 18 21.8 Q13 22.8 8 21.8 Q3.2 20.6 2.8 17 Q2.4 13.6 4.4 11.6 Z" fill="#f0eff1"/><ellipse cx="8.2" cy="7.2" rx="3.3" ry="2.6" fill="#8f8f95"/><ellipse cx="17.8" cy="7.2" rx="3.3" ry="2.6" fill="#8f8f95"/><path d="M5.2 13 Q13 10.6 20.8 13 L20.6 18.2 Q13 20.6 5.4 18.2 Z" fill="#262832"/><path d="M10.4 14.4 L10.4 16.8 M15.6 14.4 L15.6 16.8" stroke="#f0eff1" stroke-width="2" stroke-linecap="round"/></svg>
<svg style="position:absolute;left:1798.3px;top:1477.6px" width="17" height="17" viewBox="0 0 17 17"><rect x="0.2" y="0.2" width="16.4" height="16.6" rx="3" fill="#14a895"/><path d="M4 5.4 L7.2 8.2 L4 11" stroke="#0e2a2a" stroke-width="1.6" fill="none" stroke-linecap="round" stroke-linejoin="round"/><path d="M8.4 12.2 L12.4 12.2" stroke="#0e2a2a" stroke-width="1.6" stroke-linecap="round"/></svg>
<svg style="position:absolute;left:1834.6px;top:1474.0px" width="24" height="24" viewBox="0 0 24 24"><path d="M12 4.0 Q12.6 11.4 20.0 12 Q12.6 12.6 12 20.0 Q11.4 12.6 4.0 12 Q11.4 11.4 12 4.0 Z" stroke="#f0eff1" stroke-width="2.0" fill="#36373d" stroke-linejoin="round"/><path d="M5.7 2.9 Q5.95 5.25 8.3 5.5 Q5.95 5.75 5.7 8.1 Q5.45 5.75 3.1 5.5 Q5.45 5.25 5.7 2.9 Z M18.5 15.6 Q18.75 17.95 21.1 18.2 Q18.75 18.45 18.5 20.8 Q18.25 18.45 15.9 18.2 Q18.25 17.95 18.5 15.6 Z" fill="#d0cfd3" stroke="#d0cfd3" stroke-width="1.1" stroke-linejoin="round"/></svg>
<svg style="position:absolute;left:1874px;top:1475px" width="20" height="22" viewBox="0 0 20 22"><path d="M10 3.6 Q14.6 3.6 14.6 9.4 L14.6 12.6 L16.2 14.6 L3.8 14.6 L5.4 12.6 L5.4 9.4 Q5.4 3.6 10 3.6 Z" stroke="#f0eff1" stroke-width="2" fill="none" stroke-linejoin="round"/><path d="M7.2 17.4 Q10 20.2 12.8 17.4" stroke="#f0eff1" stroke-width="2" fill="none" stroke-linecap="round"/></svg>
</div></div>
<div style="position:absolute;left:86px;top:58px;width:1828px;height:1452px;box-sizing:border-box;border-radius:15px;border:2px solid #2f3036;border-top-color:#9d9ca2;border-bottom-color:#37373f"></div>
</body></html>
